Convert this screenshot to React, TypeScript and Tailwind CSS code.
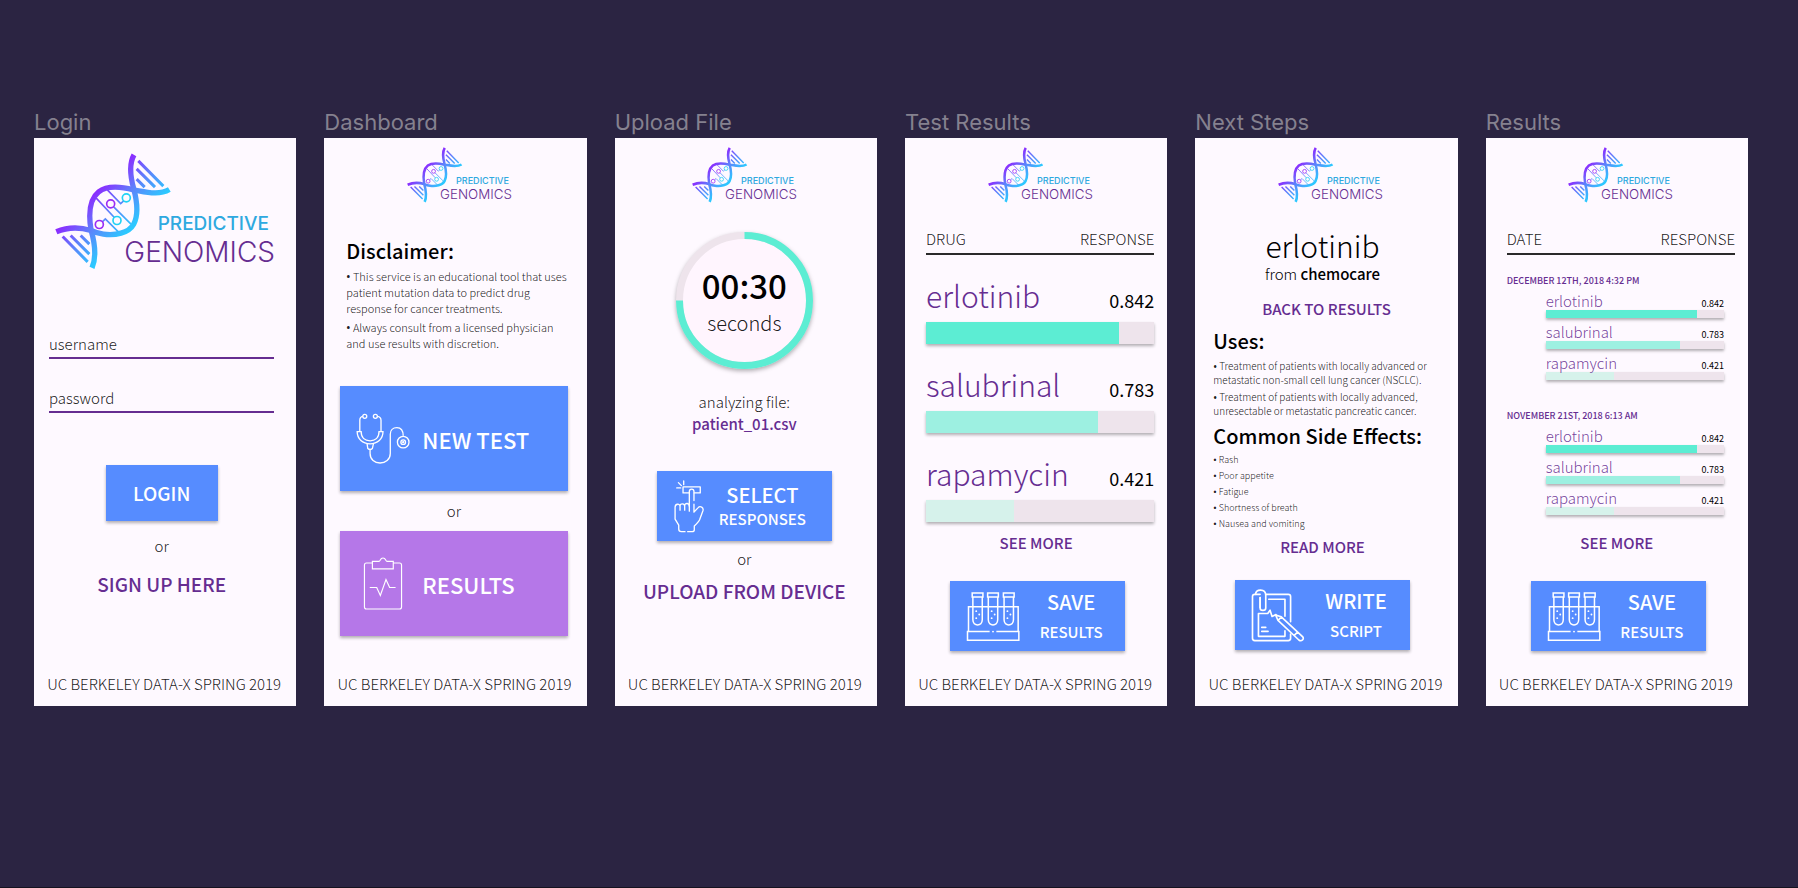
import { useId } from 'react';
import type { ReactNode } from 'react';

type IconProps = { className?: string };

function Logo({ className }: IconProps) {
  const strand = useId();
  const ink = `url(#${strand})`;
  return (
    <svg viewBox="105 158 660 350" className={className} role="img" aria-label="Predictive Genomics">
      <defs>
        <linearGradient id={strand} gradientUnits="userSpaceOnUse" x1="250" y1="250" x2="358" y2="358">
          <stop offset="0" stopColor="#8b2cff" />
          <stop offset="0.5" stopColor="#5b86fb" />
          <stop offset="1" stopColor="#2cc9ff" />
        </linearGradient>
      </defs>
      <g fill="none" stroke={ink}>
        <g strokeWidth="16">
          <path d="M342 163C327 190 331 228 341 264C352 305 355 345 341 371C326 398 285 406 250 401C236 399 224 395 213 390C180 380 140 381 109 394" />
          <path d="M448 267C416 286 376 274 341 268C305 259 262 254 236 274C206 298 206 345 213 388C225 430 231 468 216 502" />
        </g>
        <g strokeWidth="9">
          <path d="M355 181L430 257M350 205L405 260M350 236L374 260" />
          <path d="M128 408L203 484M152 405L208 461M182 405L208 431" />
        </g>
        <g strokeWidth="5">
          <path d="M262 268L302 309L311 301M228 292L283 351M281 319L333 371M247 364L256 355L295 394" />
        </g>
      </g>
      <g fill="none" strokeWidth="5">
        <circle cx="319" cy="292" r="12" stroke="#1fd3f5" />
        <circle cx="291" cy="360" r="12" stroke="#1fd3f5" />
        <circle cx="272" cy="310" r="12" stroke="#9a2bf5" />
        <circle cx="238" cy="372" r="12" stroke="#9a2bf5" />
      </g>
      <text x="413" y="387" className="fill-[#2fa9e0] font-['Inter',sans-serif] text-[57px] font-medium">PREDICTIVE</text>
      <text x="313" y="484" className="fill-[#662d91] font-['Inter',sans-serif] text-[84px] font-light">GENOMICS</text>
    </svg>
  );
}

function Stethoscope({ className }: IconProps) {
  return (
    <svg viewBox="136 128 162 154" className={className} fill="none" stroke="white" strokeWidth="4" aria-hidden="true">
      <circle cx="162" cy="138" r="6" />
      <circle cx="194" cy="138" r="6" />
      <path d="M156 138C149 139 147 144 147 150V184M200 138C208 139 211 144 211 150V184" />
      <path d="M139 184H151C151 203 163 212 178 212S205 203 205 184H217C217 207 200 221 178 221S139 207 139 184Z" />
      <path d="M169 221L171 235Q178 241 185 235L188 221" />
      <path d="M178 239V250C178 268 192 279 208 279S239 268 239 250V192C239 180 247 172 259 172S278 182 278 197" />
      <circle cx="278" cy="216" r="17.500" />
      <circle cx="278" cy="216" r="7" />
      <circle cx="278" cy="216" r="1.500" fill="white" />
    </svg>
  );
}

function Clipboard({ className }: IconProps) {
  return (
    <svg viewBox="139 556 162 160" className={className} fill="none" stroke="white" strokeWidth="3.500" aria-hidden="true">
      <path d="M188 574H170Q164 574 164 580V707Q164 713 170 713H270Q276 713 276 707V580Q276 574 270 574H251" />
      <path d="M188 592V569H208C212 569 211 559 220 559S228 569 232 569H251V592Z" />
      <path d="M180 648H201L212 672L229 624L240 648H258" />
    </svg>
  );
}

function PressingHand({ className }: IconProps) {
  return (
    <svg viewBox="220 115 94 160" className={className} fill="none" stroke="white" strokeWidth="4" strokeLinecap="round" strokeLinejoin="round" aria-hidden="true">
      <path d="M230 139H242M235 123L244 132M251 118V129" />
      <path d="M267 154H249V136H301V154H283" />
      <path d="M268 209V150C268 140 282 140 282 150V177" />
      <path d="M268 194C268 184 254 183 254 193V206M254 194C254 185 240 184 240 194V206M240 195C240 185 225 186 225 197V233L236 251V263Q236 271 244 271H255" />
      <path d="M282 188V212L294 199C301 191 312 198 309 208L299 235Q296 242 283 254V265Q283 271 276 271H263" />
    </svg>
  );
}

function TestTubes({ className }: IconProps) {
  return (
    <svg viewBox="232 450 160 152" className={className} fill="none" stroke="white" strokeWidth="4.500" aria-hidden="true">
      {[266, 312, 359].map((x) => (
        <g key={x} transform={`translate(${x} 0)`}>
          <path d="M-16 456H16V468H-16ZM-14 468V536C-14 556 14 556 14 536V468" />
          <g fill="white" stroke="none">
            <circle cx="-4" cy="510" r="2.800" />
            <circle cx="5" cy="520" r="2.800" />
            <circle cx="-4" cy="531" r="2.800" />
          </g>
        </g>
      ))}
      <path d="M239 571V497H387V571" />
      <path d="M302 571H236V597H389V571H322" />
      <circle cx="312" cy="571" r="2.800" fill="white" stroke="none" />
    </svg>
  );
}

function ScriptPad({ className }: IconProps) {
  return (
    <svg viewBox="218 564 162 160" className={className} fill="none" stroke="white" strokeWidth="5" strokeLinejoin="round" strokeLinecap="round" aria-hidden="true">
      <path d="M245 620V590M262 580H330Q337 580 337 587V663M337 700V713Q337 720 330 720H229Q222 720 222 713V587Q222 580 229 580H245" />
      <path d="M231 580C233 563 261 563 262 582V621C262 631 245 631 245 621V590" />
      <path d="M271 595H320V646M320 690V707H240V638H268L275 628L281 647L293 641" />
      <path d="M250 680H262M250 692H269" />
      <path d="M292 643L309 648L373 708C380 715 370 724 362 718L299 659ZM299 659L309 648M348 704L358 694" />
    </svg>
  );
}

function Screen({ title, children, logo = 'side' }: { title: string; children: ReactNode; logo?: 'large' | 'center' | 'side' }) {
  const headers = {
    large: 'flex justify-center pt-[15px]',
    center: 'flex justify-center pt-[9px] pr-[2px]',
    side: 'flex justify-center pt-[9px] pl-2',
  };
  return (
    <section className="flex flex-col gap-[2px]">
      <h2 className="font-['Inter',sans-serif] text-[22px] leading-[28px] whitespace-nowrap text-[#85818f]">{title}</h2>
      <div className="flex min-h-[568px] flex-1 flex-col bg-[#fef9ff] pb-[10px]">
        <header className={headers[logo]}>
          <Logo className={logo === 'large' ? 'h-[117px] w-[220px]' : 'h-[56px] w-[105px]'} />
        </header>
        {children}
        <footer className="mt-auto pr-[2px] text-center text-[15px] leading-[24px] font-light whitespace-nowrap text-black/90">UC BERKELEY DATA-X SPRING 2019</footer>
      </div>
    </section>
  );
}

function Or() {
  return <p className="text-center text-[15px] leading-[24px] font-light text-black/90">or</p>;
}

function TextLink({ children, className }: { children: ReactNode; className: string }) {
  return (
    <a href="#" className={`self-center font-medium whitespace-nowrap text-[#662d91] ${className}`}>
      {children}
    </a>
  );
}

function BulletList({ items, className }: { items: string[]; className: string }) {
  return (
    <ul className={`font-light text-black/90 ${className}`}>
      {items.map((item) => (
        <li key={item}>
          <span className="font-['Open_Sans',sans-serif] leading-none font-semibold">•</span> {item}
        </li>
      ))}
    </ul>
  );
}

function ActionButton({ icon, top, bottom, className, textClass }: { icon: ReactNode; top: string; bottom: string; className: string; textClass: string }) {
  return (
    <button type="button" className={`flex h-[70px] w-[175px] items-center self-center bg-[#568cff] pl-4 font-medium text-white shadow-[0_2px_3px_rgba(0,0,0,0.3)] ${className}`}>
      {icon}
      <span className={`flex flex-1 flex-col items-center ${textClass}`}>
        <span className="text-[20px] leading-[26px]">{top}</span>
        <span className="text-[15px] leading-[22px]">{bottom}</span>
      </span>
    </button>
  );
}

const drugs = [
  { name: 'erlotinib', value: '0.842', fill: 84.6, tone: 'bg-[#5cedd3]' },
  { name: 'salubrinal', value: '0.783', fill: 75.4, tone: 'bg-[#9df0e1]' },
  { name: 'rapamycin', value: '0.421', fill: 38.4, tone: 'bg-[#d6f2eb]' },
];

function Bar({ fill, tone, height }: { fill: number; tone: string; height: string }) {
  return (
    <div className={`bg-[#eee4ec] shadow-[0_2px_3px_rgba(0,0,0,0.3)] ${height}`}>
      <div className={`h-full ${tone}`} style={{ width: `${fill}%` }} />
    </div>
  );
}

function HeadRow({ left }: { left: string }) {
  return (
    <thead className="text-[15px] leading-[22px] text-black/90">
      <tr className="border-b-2 border-[#2a2a2a]">
        <th scope="col" className="pb-[3px] text-left font-light">{left}</th>
        <th scope="col" className="pb-[3px] text-right font-light">RESPONSE</th>
      </tr>
    </thead>
  );
}

function LargeRows() {
  return drugs.map((d) => (
    <tbody key={d.name}>
      <tr>
        <th scope="row" className="pt-[20px] text-left align-baseline text-[30px] leading-[40px] font-light text-[#662d91]">{d.name}</th>
        <td className="text-right align-baseline text-[18px] leading-[20px]">{d.value}</td>
      </tr>
      <tr>
        <td colSpan={2} className="pt-[7px]">
          <Bar fill={d.fill} tone={d.tone} height="h-[22px]" />
        </td>
      </tr>
    </tbody>
  ));
}

function DatedRows({ date, gap }: { date: string; gap: string }) {
  return (
    <tbody>
      <tr>
        <th colSpan={2} scope="rowgroup" className={`text-left text-[9px] leading-[12px] font-medium text-[#662d91] ${gap}`}>{date}</th>
      </tr>
      {drugs.map((d) => (
        <tr key={d.name}>
          <td colSpan={2} className="pt-[5px] pr-[11px] pl-[39px]">
            <div className="flex items-baseline justify-between">
              <span className="text-[15px] leading-[18px] font-light text-[#662d91]/90">{d.name}</span>
              <span className="text-[9px] leading-[10px]">{d.value}</span>
            </div>
            <Bar fill={d.fill} tone={d.tone} height="h-[8px]" />
          </td>
        </tr>
      ))}
    </tbody>
  );
}

function Login() {
  const field = 'h-[26px] w-full border-b-2 border-[#662d91] bg-transparent pb-[4px] text-[15px] leading-[18px] font-light outline-none placeholder:text-black/90';
  return (
    <Screen title="Login" logo="large">
      <form className="mt-[63px] flex flex-col pr-[22px] pl-[15px]">
        <div className="flex flex-col gap-[28px]">
          <input className={field} type="text" placeholder="username" aria-label="username" />
          <input className={field} type="password" placeholder="password" aria-label="password" />
        </div>
        <button type="button" className="mt-[52px] mb-[13px] h-[56px] w-[112px] self-center bg-[#568cff] text-[19px] font-medium text-white shadow-[0_2px_3px_rgba(0,0,0,0.3)]">LOGIN</button>
        <Or />
        <TextLink className="mt-[12px] text-[19px] leading-[28px]">SIGN UP HERE</TextLink>
      </form>
    </Screen>
  );
}

function Dashboard() {
  const tile = 'flex h-[105px] items-center gap-3 pl-4 text-[22px] leading-[30px] font-medium text-white shadow-[0_2px_3px_rgba(0,0,0,0.3)]';
  return (
    <Screen title="Dashboard">
      <div className="mt-[34px] pr-[12px] pl-[22px]">
        <h3 className="text-[20px] leading-[28px] font-medium">Disclaimer:</h3>
        <BulletList
          className="mt-[3px] flex flex-col gap-[3px] text-[11px] leading-[16px]"
          items={[
            'This service is an educational tool that uses patient mutation data to predict drug response for cancer treatments.',
            'Always consult from a licensed physician and use results with discretion.',
          ]}
        />
      </div>
      <div className="mt-[35px] flex flex-col gap-[8px] pr-[19px] pl-[16px]">
        <button type="button" className={`bg-[#568cff] ${tile}`}>
          <Stethoscope className="h-[51px] w-[54px]" />
          NEW TEST
        </button>
        <Or />
        <button type="button" className={`bg-[#b577e8] ${tile}`}>
          <Clipboard className="h-[53px] w-[54px]" />
          RESULTS
        </button>
      </div>
    </Screen>
  );
}

function Timer() {
  return (
    <div className="mt-[29px] grid size-[137px] place-items-center self-center">
      <svg viewBox="0 0 137 137" className="col-start-1 row-start-1 size-[137px] overflow-visible drop-shadow-[0_2px_2px_rgba(0,0,0,0.3)]" fill="none" aria-hidden="true">
        <circle cx="68.500" cy="68.500" r="65" fill="#fff5fe" stroke="#eee4ec" strokeWidth="7" />
        <path d="M68.500 3.500A65 65 0 1 1 3.500 68.500" stroke="#5cedd3" strokeWidth="7" />
      </svg>
      <div className="z-10 col-start-1 row-start-1 flex flex-col items-center gap-[4px] text-center">
        <span className="text-[33px] leading-[40px] font-medium">00:30</span>
        <span className="text-[20px] leading-[28px] font-light text-black/90">seconds</span>
      </div>
    </div>
  );
}

function UploadFile() {
  return (
    <Screen title="Upload File" logo="center">
      <div className="flex flex-col pr-[3px]">
        <Timer />
        <p className="mt-[22px] text-center text-[15px] leading-[22px] font-light text-black/90">
          analyzing file:
          <strong className="block font-medium text-[#662d91]">patient_01.csv</strong>
        </p>
        <ActionButton className="mt-[36px] mb-[6px]" icon={<PressingHand className="h-[53px] w-[32px]" />} top="SELECT" bottom="RESPONSES" textClass="pr-[12px]" />
        <Or />
        <TextLink className="mt-[6px] text-[19px] leading-[28px]">UPLOAD FROM DEVICE</TextLink>
      </div>
    </Screen>
  );
}

function SaveResults() {
  return <ActionButton className="mt-[27px] ml-[3px]" icon={<TestTubes className="h-[51px] w-[54px]" />} top="SAVE" bottom="RESULTS" textClass="gap-[6px] pr-[3px]" />;
}

function TestResults() {
  return (
    <Screen title="Test Results">
      <div className="mt-[25px] pr-[13px] pl-[21px]">
        <table className="w-full">
          <HeadRow left="DRUG" />
          <LargeRows />
        </table>
      </div>
      <TextLink className="mt-[10px] text-[15px] leading-[22px]">SEE MORE</TextLink>
      <SaveResults />
    </Screen>
  );
}

function NextSteps() {
  return (
    <Screen title="Next Steps">
      <div className="mt-[24px] flex flex-col pr-[26px] pl-[18px]">
        <h3 className="text-center text-[30px] leading-[36px] font-light">erlotinib</h3>
        <p className="text-center text-[15px] leading-[22px] font-light">
          from <strong className="font-medium">chemocare</strong>
        </p>
        <TextLink className="mt-[13px] -mr-2 text-[15px] leading-[22px]">BACK TO RESULTS</TextLink>
        <h4 className="mt-[7px] text-[20px] leading-[28px] font-medium">Uses:</h4>
        <BulletList
          className="mt-[4px] -mr-2 flex flex-col gap-[3px] text-[10px] leading-[14px]"
          items={[
            'Treatment of patients with locally advanced or metastatic non-small cell lung cancer (NSCLC).',
            'Treatment of patients with locally advanced, unresectable or metastatic pancreatic cancer.',
          ]}
        />
        <h4 className="mt-[4px] text-[20px] leading-[28px] font-medium whitespace-nowrap">Common Side Effects:</h4>
        <BulletList className="mt-[2px] text-[9px] leading-[16px]" items={['Rash', 'Poor appetite', 'Fatigue', 'Shortness of breath', 'Nausea and vomiting']} />
        <TextLink className="mt-[4px] text-[15px] leading-[22px]">READ MORE</TextLink>
        <ActionButton className="mt-[22px]" icon={<ScriptPad className="h-[53px] w-[54px]" />} top="WRITE" bottom="SCRIPT" textClass="gap-[6px] pr-[3px]" />
      </div>
    </Screen>
  );
}

function Results() {
  return (
    <Screen title="Results">
      <div className="mt-[25px] pr-[13px] pl-[21px]">
        <table className="w-full">
          <HeadRow left="DATE" />
          <DatedRows date="DECEMBER 12TH, 2018 4:32 PM" gap="pt-[20px]" />
          <DatedRows date="NOVEMBER 21ST, 2018 6:13 AM" gap="pt-[30px]" />
        </table>
      </div>
      <TextLink className="mt-[17px] text-[15px] leading-[22px]">SEE MORE</TextLink>
      <SaveResults />
    </Screen>
  );
}

export default function App() {
  return (
    <main className="min-h-screen border-b border-[#15121f] bg-[#2b2442] pt-[108px] pr-[50px] pb-12 pl-[34px] font-['Noto_Sans_CJK_SC',sans-serif] text-black">
      <div className="grid grid-cols-6 gap-[28px]">
        <Login />
        <Dashboard />
        <UploadFile />
        <TestResults />
        <NextSteps />
        <Results />
      </div>
    </main>
  );
}
